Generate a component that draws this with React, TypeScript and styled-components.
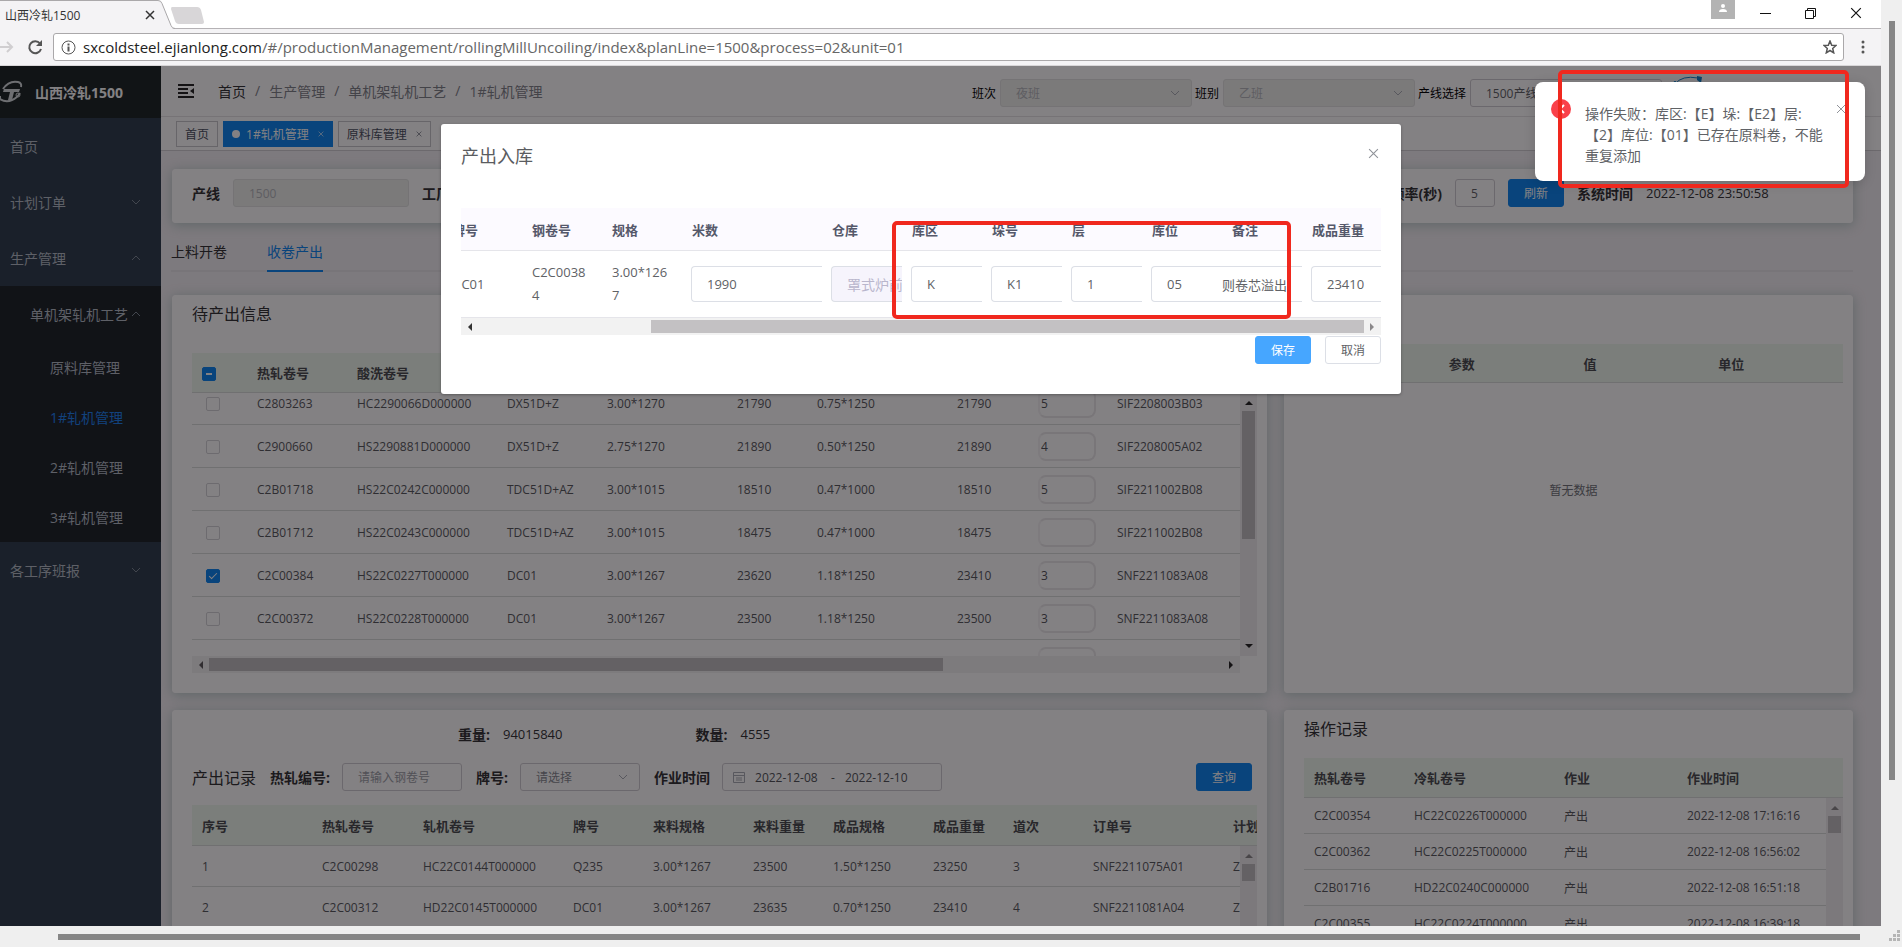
import React from "react";
import styled, { createGlobalStyle, css } from "styled-components";

const GlobalStyle = createGlobalStyle`
  *, *::before, *::after { box-sizing: border-box; }
  html, body, #root { height: 100%; }
  body {
    margin: 0;
    overflow: hidden;
    font-family: "Open Sans", "Noto Sans CJK SC", sans-serif;
    font-size: 14px;
    color: #303133;
    background: #efefef;
  }
  button, input, select { font-family: inherit; margin: 0; }
  a { color: inherit; text-decoration: none; }
  h1, h2, p { margin: 0; font-weight: 400; }
`;

/* ---------- remote viewer frame ---------- */

const Viewer = styled.div`
  display: grid;
  grid-template-columns: minmax(0, 1fr) 21px;
  grid-template-rows: minmax(0, 1fr) 21px;
  height: 100vh;
  background: #efefef;
`;

const Browser = styled.div`
  display: flex;
  flex-direction: column;
  min-width: 0;
  min-height: 0;
  background: #fff;
`;

const OuterVertical = styled.div`
  padding: 21px 7px 146px 8px;
  display: flex;
`;

const OuterHorizontal = styled.div`
  padding: 8px 21px 7px 58px;
  display: flex;
`;

const OuterThumb = styled.div`
  flex: 1;
  background: #868686;
`;

const Grip = styled.svg`
  width: 21px;
  height: 21px;
`;

/* ---------- browser chrome ---------- */

const TabStrip = styled.div`
  display: flex;
  height: 29px;
  flex: none;
  background: #fff;
  border-bottom: 1px solid #b5b2b5;
  position: relative;
`;

const TabShape = styled.svg`
  position: absolute;
  left: 0;
  top: 0;
`;

const BrowserTab = styled.div`
  position: relative;
  display: flex;
  align-items: center;
  justify-content: space-between;
  width: 155px;
  height: 29px;
  padding-left: 5px;
  font-size: 12px;
  color: #333;
`;

const IconButton = styled.button`
  display: flex;
  align-items: center;
  justify-content: center;
  border: 0;
  padding: 0;
  background: none;
  color: inherit;
`;

const WindowButtons = styled.div`
  display: flex;
  margin-left: auto;
  padding-right: 19px;
  gap: 34px;
  height: 26px;
  align-items: center;
  color: #111;
`;

const UserBadge = styled.div`
  align-self: flex-start;
  width: 24px;
  height: 19px;
  margin-right: -9px;
  background: #b3b3b3;
`;

const Toolbar = styled.div`
  display: flex;
  align-items: center;
  height: 37px;
  flex: none;
  padding-right: 13px;
  background: #f4f3f5;
  border-bottom: 1px solid #d8d6d8;
  color: #555;
`;

const AddressBox = styled.div`
  flex: 1;
  display: flex;
  align-items: center;
  height: 28px;
  margin: 0 14px 0 10px;
  padding: 0 6px 0 7px;
  gap: 7px;
  background: #fff;
  border: 1px solid #aaa8aa;
  border-radius: 3px;
`;

const Url = styled.span`
  flex: 1;
  font-size: 15px;
  color: #666;
  b { font-weight: 400; color: #222; }
`;

/* ---------- application shell ---------- */

const Page = styled.div`
  flex: 1;
  min-height: 0;
  display: flex;
  position: relative;
  overflow: hidden;
  background: #f3f0f4;
`;

const Sidebar = styled.nav`
  width: 161px;
  flex: none;
  background: #2d3d4c;
  color: #b4bcc6;
  svg { color: #7d8894; }
`;

const Brand = styled.div`
  display: flex;
  align-items: center;
  height: 52px;
  gap: 11px;
  background: #1a2424;
  color: #fff;
  font-size: 14px;
  font-weight: 700;
  svg { color: #d5dadd; }
`;

const MenuItem = styled.a<{ $level?: number; $active?: boolean }>`
  display: flex;
  align-items: center;
  justify-content: space-between;
  height: ${(p) => (p.$level === 2 ? 50 : 56)}px;
  padding: 0 20px 0 ${(p) => [10, 30, 50][p.$level ?? 0]}px;
  color: ${(p) => (p.$active ? "#1c80f0" : "inherit")};
  white-space: nowrap;
`;

const SubMenu = styled.div`
  background: #1a2226;
`;

const Main = styled.main`
  flex: 1;
  min-width: 0;
  display: flex;
  flex-direction: column;
`;

const Navbar = styled.header`
  display: flex;
  align-items: center;
  height: 51px;
  flex: none;
  padding: 0 178px 0 17px;
  background: #fff;
  border-bottom: 1px solid #e4e2e4;
`;

const Breadcrumb = styled.div`
  display: flex;
  gap: 9px;
  margin-left: 24px;
  color: #7f8289;
  a:first-child { color: #303133; }
`;

const ShiftBar = styled.div`
  display: flex;
  align-items: center;
  gap: 3px;
  margin-left: auto;
  padding-top: 4px;
  font-size: 12px;
  color: #000;
`;

const Field = styled.label<{ $bold?: boolean; $gap?: number }>`
  display: flex;
  align-items: center;
  gap: ${(p) => p.$gap ?? 4}px;
  white-space: nowrap;
  font-weight: ${(p) => (p.$bold ? 700 : 400)};
`;

const box = css`
  height: 28px;
  border: 1px solid #cfcdd2;
  border-radius: 3px;
  background: #fff;
  color: #606266;
  font-size: 12px;
  outline: 0;
  &:disabled {
    background: #eef0ed;
    border-color: #e2e3e2;
    color: #b4b7bb;
    opacity: 1;
  }
  &::placeholder { color: #9b9ea6; opacity: 1; }
`;

const TextBox = styled.input<{ $w: number }>`
  ${box}
  width: ${(p) => p.$w}px;
  padding: 0 15px;
`;

const SelectWrap = styled.span<{ $w: number }>`
  position: relative;
  display: flex;
  width: ${(p) => p.$w}px;
  svg { position: absolute; right: 12px; top: 10px; color: #a9adb4; }
`;

const SelectBox = styled.select<{ $hint?: boolean }>`
  ${box}
  appearance: none;
  width: 100%;
  padding: 0 15px;
  ${(p) => p.$hint && "color: #85888f;"}
`;

const Avatar = styled.svg`
  margin-left: 8px;
  margin-bottom: 4px;
`;

const TagsBar = styled.div`
  display: flex;
  align-items: center;
  gap: 5px;
  height: 34px;
  flex: none;
  padding-left: 15px;
  background: #fff;
  border-bottom: 1px solid #d0ced2;
`;

const Tag = styled.a<{ $active?: boolean }>`
  display: flex;
  align-items: center;
  height: 26px;
  padding: 0 8px;
  gap: 9px;
  border: 1px solid ${(p) => (p.$active ? "#0a84f0" : "#c6c6ca")};
  background: ${(p) => (p.$active ? "#0a84f0" : "#fff")};
  color: ${(p) => (p.$active ? "#fff" : "#495060")};
  font-size: 12px;
  white-space: nowrap;
`;

const Dot = styled.i`
  width: 8px;
  height: 8px;
  border-radius: 50%;
  background: #fff;
  margin-right: -3px;
`;

const Content = styled.div`
  flex: 1;
  min-height: 0;
  overflow: hidden;
  padding: 18px 28px 0 11px;
`;

const Card = styled.section<{ $h?: number }>`
  height: ${(p) => (p.$h ? `${p.$h}px` : "auto")};
  min-width: 0;
  padding: 0 10px 0 20px;
  overflow: hidden;
  background: #fff;
  border-radius: 4px;
`;

const Shadow = styled.div`
  border-radius: 4px;
  min-width: 0;
  box-shadow: 0 2px 12px 1px rgba(176, 196, 194, 0.8);
`;

const StatusBar = styled.div`
  display: flex;
  align-items: center;
  gap: 13px;
  height: 54px;
  padding: 0 70px 6px 0;
`;

const PushRight = styled.div`
  display: flex;
  align-items: center;
  gap: 13px;
  margin-left: auto;
`;

const Clock = styled.span`
  min-width: 127px;
  font-size: 13px;
`;

const Button = styled.button<{ $primary?: boolean; $bright?: boolean }>`
  height: 28px;
  min-width: 56px;
  padding: 0;
  border: 1px solid ${(p) => (p.$primary ? (p.$bright ? "#46a6ff" : "#0a84f0") : "#dcdfe6")};
  border-radius: 3px;
  background: ${(p) => (p.$primary ? (p.$bright ? "#46a6ff" : "#0a84f0") : "#fff")};
  color: ${(p) => (p.$primary ? "#fff" : "#606266")};
  font-size: 12px;
`;

const Tabs = styled.div`
  display: flex;
  gap: 40px;
  height: 40px;
  margin: 9px 0 23px -1px;
  border-bottom: 2px solid #e8e6ea;
`;

const TabLink = styled.a<{ $active?: boolean }>`
  height: 40px;
  line-height: 40px;
  color: ${(p) => (p.$active ? "#0a84f0" : "#303133")};
  border-bottom: 2px solid ${(p) => (p.$active ? "#0a84f0" : "transparent")};
`;

const Columns = styled.div`
  display: grid;
  grid-template-columns: minmax(0, 1095fr) minmax(0, 569fr);
  gap: 17px;
`;

const CardTitle = styled.h2`
  height: 38px;
  line-height: 38px;
  font-size: 16px;
  white-space: nowrap;
`;

const Clip = styled.div<{ $h?: number }>`
  overflow: hidden;
  min-width: 0;
  flex: 1;
  height: ${(p) => (p.$h ? `${p.$h}px` : "auto")};
`;

const Row = styled.div`
  display: flex;
`;

const HeadArea = styled.div`
  background: #eff8ee;
  overflow: hidden;
`;

const Spacer = styled.div<{ $h: number }>`
  height: ${(p) => p.$h}px;
`;

const Table = styled.table<{ $rowH: number; $pull?: number }>`
  table-layout: fixed;
  width: 100%;
  border-collapse: separate;
  border-spacing: 0;
  margin-top: -${(p) => p.$pull ?? 0}px;
  th, td {
    height: ${(p) => p.$rowH}px;
    padding: 0 0 0 10px;
    text-align: left;
    white-space: nowrap;
    border-bottom: 1px solid #d9dcdb;
    color: #56585d;
    font-size: 12px;
  }
  th { font-size: 13px; font-weight: 700; color: #484b4f; overflow: hidden; }
`;

const Check = styled.input`
  display: block;
  appearance: none;
  width: 14px;
  height: 14px;
  margin: 2px 0 0 4px;
  border: 1px solid #d2d2d6;
  border-radius: 2px;
  background: #fff;
  position: relative;
  &:checked, &[data-mixed] { background: #0a84f0; border-color: #0a84f0; }
  &:checked::after {
    content: "";
    position: absolute;
    left: 4px;
    top: 1px;
    width: 4px;
    height: 8px;
    border: solid #fff;
    border-width: 0 1px 1px 0;
    transform: rotate(45deg);
  }
  &[data-mixed]::after {
    content: "";
    position: absolute;
    left: 3px;
    top: 5px;
    width: 6px;
    height: 2px;
    background: #fff;
  }
  &[data-mixed] { margin-left: 0; }
`;

const PassInput = styled.input`
  display: block;
  width: 58px;
  height: 29px;
  margin-left: 1px;
  padding: 0 0 0 1px;
  border: 2px solid #eae8ea;
  border-left-color: #f4f2f4;
  border-radius: 8px;
  background: transparent;
  color: #505358;
  font-size: 12px;
`;

/* ---------- drawn scroll bars ---------- */

const VBar = styled.div`
  width: 17px;
  flex: none;
  display: flex;
  flex-direction: column;
  align-items: center;
  background: #f1eff1;
  padding: 6px 0;
`;

const VThumb = styled.div<{ $h: number }>`
  width: 13px;
  height: ${(p) => p.$h}px;
  margin: 4px 0 auto;
  background: #c1bfc1;
`;

const HBar = styled.div<{ $mr?: number }>`
  height: 17px;
  display: flex;
  align-items: center;
  justify-content: space-between;
  background: #f2f2f2;
  padding: 0 5px;
  margin-right: ${(p) => p.$mr ?? 0}px;
`;

const HTrack = styled.div<{ $left: number; $right: number }>`
  flex: 1;
  height: 13px;
  margin: 0 4px;
  padding: 0 ${(p) => p.$right}% 0 ${(p) => p.$left}%;
`;

const HThumb = styled.div<{ $dark?: boolean }>`
  height: 13px;
  background: ${(p) => (p.$dark ? "#c1bfc1" : "#c3c1c3")};
`;

/* ---------- output record card ---------- */

const Totals = styled.div`
  display: flex;
  gap: 133px;
  height: 48px;
  align-items: center;
  padding-left: 266px;
`;

const Total = styled.p`
  display: flex;
  align-items: center;
  gap: 13px;
  font-size: 13px;
  b { font-size: 14px; }
`;

const FilterBar = styled.div`
  display: flex;
  align-items: center;
  height: 28px;
  margin: 5px 5px 14px 0;
  gap: 14px;
`;

const FilterTitle = styled.h2`
  font-size: 16px;
  white-space: nowrap;
`;

const DateRange = styled.div`
  ${box}
  width: 220px;
  display: flex;
  align-items: center;
  gap: 10px;
  padding: 0 10px;
  font-weight: 400;
  color: #505358;
`;

const DateInput = styled.input`
  width: 66px;
  border: 0;
  padding: 0;
  background: none;
  font-size: 12px;
  color: inherit;
`;

/* ---------- overlay, dialog, message ---------- */

const Overlay = styled.div`
  position: absolute;
  inset: 0;
  display: flex;
  justify-content: center;
  align-items: flex-start;
  padding: 58px 39px 0 0;
  background: rgba(8, 4, 8, 0.5);
`;

const Dialog = styled.div`
  position: relative;
  width: 960px;
  padding: 20px 20px 30px;
  background: #fff;
  border-radius: 3px;
  box-shadow: 0 1px 3px rgba(0, 0, 0, 0.3);
`;

const DialogHead = styled.div`
  display: flex;
  justify-content: space-between;
  height: 64px;
  padding-right: 2px;
  line-height: 24px;
  h1 { font-size: 18px; color: #5a5c60; }
  button { height: 18px; color: #909399; }
`;

const DialogTable = styled.table`
  table-layout: fixed;
  width: 940px;
  margin-left: -19px;
  border-collapse: separate;
  border-spacing: 0;
  th {
    height: 43px;
    padding: 0 0 0 10px;
    text-align: left;
    font-size: 13px;
    color: #55586a;
    background: #fcfaff;
    border-bottom: 1px solid #e5e5ea;
    white-space: nowrap;
  }
  td {
    height: 67px;
    padding: 0 10px;
    font-size: 13px;
    line-height: 23px;
    color: #606266;
    word-break: break-all;
    border-bottom: 1px solid #e5e5ea;
  }
  td.edit { padding: 0 0 0 9px; }
  td.note { padding: 0; }
`;

const CellInput = styled.input<{ $note?: boolean }>`
  display: block;
  width: 100%;
  height: 36px;
  padding: 0 0 0 ${(p) => (p.$note ? 0 : 15)}px;
  border: 1px solid #dcdfe6;
  border-right: 0;
  border-left-width: ${(p) => (p.$note ? 0 : 1)}px;
  border-radius: ${(p) => (p.$note ? 0 : 4)}px 0 0 ${(p) => (p.$note ? 0 : 4)}px;
  background: #fff;
  color: #606266;
  font-size: 13px;
  &:disabled { background: #f6f4fc; color: #b9b6cc; font-size: 14px; }
`;

const DialogFoot = styled.div`
  display: flex;
  justify-content: flex-end;
  gap: 14px;
  margin-top: 1px;
`;

const RedMark = styled.div<{ $w: number; $h: number; $x: number; $y: number }>`
  position: absolute;
  left: ${(p) => p.$x}px;
  top: ${(p) => p.$y}px;
  width: ${(p) => p.$w}px;
  height: ${(p) => p.$h}px;
  border: 4px solid #f0281e;
  border-radius: 5px;
  pointer-events: none;
`;

const Notice = styled.div`
  position: absolute;
  right: 16px;
  top: 16px;
  width: 330px;
  height: 99px;
  display: flex;
  align-items: flex-start;
  padding: 17px 18px 0 16px;
  background: #fff;
  border-radius: 8px;
  box-shadow: 0 2px 12px rgba(0, 0, 0, 0.15);
  p {
    flex: 1;
    margin: 4px 0 0 14px;
    font-size: 14px;
    line-height: 21px;
    color: #606266;
    white-space: nowrap;
  }
  button { width: 12px; height: 20px; margin-left: -20px; color: #909399; }
`;

/* ---------- small icons ---------- */

const Chevron = ({ up = false }: { up?: boolean }) => (
  <svg width="10" height="8" viewBox="0 0 10 8" fill="none" stroke="currentColor" strokeWidth="1">
    <path d={up ? "M1 6l4-4 4 4" : "M1 2l4 4 4-4"} />
  </svg>
);

const Cross = ({ size = 10, width = 1 }: { size?: number; width?: number }) => (
  <svg width={size} height={size} viewBox="0 0 10 10" stroke="currentColor" strokeWidth={width}>
    <path d="M1 1l8 8M9 1l-8 8" />
  </svg>
);

const Arrow = ({ d, color = "#5a585a" }: { d: "up" | "down" | "left" | "right"; color?: string }) => {
  const paths = { up: "M0 6l4-4 4 4z", down: "M0 2h8l-4 4z", left: "M6 0v8L2 4z", right: "M2 0v8l4-4z" };
  return (
    <svg width="8" height="8" viewBox="0 0 8 8" fill={color}>
      <path d={paths[d]} />
    </svg>
  );
};

/* ---------- data ---------- */

const pending = [
  ["C2803263", "HC2290066D000000", "DX51D+Z", "3.00*1270", "21790", "0.75*1250", "21790", "5", "SIF2208003B03"],
  ["C2900660", "HS2290881D000000", "DX51D+Z", "2.75*1270", "21890", "0.50*1250", "21890", "4", "SIF2208005A02"],
  ["C2B01718", "HS22C0242C000000", "TDC51D+AZ", "3.00*1015", "18510", "0.47*1000", "18510", "5", "SIF2211002B08"],
  ["C2B01712", "HS22C0243C000000", "TDC51D+AZ", "3.00*1015", "18475", "0.47*1000", "18475", "", "SIF2211002B08"],
  ["C2C00384", "HS22C0227T000000", "DC01", "3.00*1267", "23620", "1.18*1250", "23410", "3", "SNF2211083A08"],
  ["C2C00372", "HS22C0228T000000", "DC01", "3.00*1267", "23500", "1.18*1250", "23500", "3", "SNF2211083A08"],
  ["", "", "", "", "", "", "", "", ""],
];
const pendingWidths = [55, 100, 150, 100, 130, 80, 140, 80, 80, 0];

const records = [
  ["1", "C2C00298", "HC22C0144T000000", "Q235", "3.00*1267", "23500", "1.50*1250", "23250", "3", "SNF2211075A01", "Z"],
  ["2", "C2C00312", "HD22C0145T000000", "DC01", "3.00*1267", "23635", "0.70*1250", "23410", "4", "SNF2211081A04", "Z"],
];
const recordHeads = ["序号", "热轧卷号", "轧机卷号", "牌号", "来料规格", "来料重量", "成品规格", "成品重量", "道次", "订单号", "计划"];
const recordWidths = [120, 101, 150, 80, 100, 80, 100, 80, 80, 140, 0];

const operations = [
  ["C2C00354", "HC22C0226T000000", "产出", "2022-12-08 17:16:16"],
  ["C2C00362", "HC22C0225T000000", "产出", "2022-12-08 16:56:02"],
  ["C2B01716", "HD22C0240C000000", "产出", "2022-12-08 16:51:18"],
  ["C2C00355", "HC22C0224T000000", "产出", "2022-12-08 16:39:18"],
];
const operationWidths = [100, 150, 123, 0];

const Cols = ({ widths }: { widths: number[] }) => (
  <colgroup>
    {widths.map((w, i) => (
      <col key={i} width={w || undefined} />
    ))}
  </colgroup>
);

type DropProps = { w: number; value: string; disabled?: boolean; hint?: boolean; label: string };

const Drop = ({ w, value, disabled, hint, label }: DropProps) => (
  <SelectWrap $w={w}>
    <SelectBox disabled={disabled} $hint={hint} aria-label={label}>
      <option>{value}</option>
    </SelectBox>
    <Chevron />
  </SelectWrap>
);

/* ---------- sections ---------- */

const Chrome = () => (
  <>
    <TabStrip>
      <TabShape width="210" height="29" viewBox="0 0 210 29">
        <path d="M0 0H158q3 0 4 3l9 23q1 3 4 3H0z" fill="#f4f3f5" />
        <path d="M0 .5H158q3 0 4 3l9 22q1 3 4 3" fill="none" stroke="#aaa8aa" />
        <path d="M172 7h25q3 0 4 3l3 12q0 2-2 2h-23q-3 0-4-3l-4-12q0-2 1-2z" fill="#d8d6d8" />
      </TabShape>
      <BrowserTab>
        <span>山西冷轧1500</span>
        <IconButton aria-label="关闭标签页">
          <Cross size={10} width={1.5} />
        </IconButton>
      </BrowserTab>
      <WindowButtons>
        <UserBadge>
          <svg width="24" height="19" viewBox="0 0 24 19" fill="#fff">
            <circle cx="12" cy="6" r="2" />
            <path d="M8 12q0-3 4-3t4 3z" />
          </svg>
        </UserBadge>
        <IconButton aria-label="最小化">
          <svg width="11" height="11" stroke="currentColor"><path d="M0 5.5h11" /></svg>
        </IconButton>
        <IconButton aria-label="还原">
          <svg width="11" height="11" fill="none" stroke="currentColor">
            <path d="M.5 2.5h8v8h-8zM2.500 2.500v-2h8v8h-2" />
          </svg>
        </IconButton>
        <IconButton aria-label="关闭">
          <Cross size={12} />
        </IconButton>
      </WindowButtons>
    </TabStrip>
    <Toolbar>
      <IconButton aria-label="前进">
        <svg width="14" height="14" fill="none" stroke="#d0ced0" strokeWidth="2"><path d="M0 7h12M7 2l5 5-5 5" /></svg>
      </IconButton>
      <IconButton aria-label="刷新页面">
        <svg width="29" height="16" viewBox="0 0 29 16" fill="none" stroke="#555" strokeWidth="2">
          <path d="M26 4.500A6 6 0 1 0 27 10" />
          <path d="M28 1v6h-6z" fill="#555" stroke="none" />
        </svg>
      </IconButton>
      <AddressBox>
        <svg width="15" height="15" viewBox="0 0 15 15" fill="none" stroke="#555" strokeWidth="1">
          <circle cx="7.500" cy="7.500" r="6.500" />
          <path d="M7.500 6.500v5M7.500 3.500v2" strokeWidth="2" />
        </svg>
        <Url>
          <b>sxcoldsteel.ejianlong.com</b>/#/productionManagement/rollingMillUncoiling/index&amp;planLine=1500&amp;process=02&amp;unit=01
        </Url>
        <IconButton aria-label="收藏">
          <svg width="14" height="14" viewBox="0 0 14 14" fill="none" stroke="#555" strokeWidth="1.500">
            <path d="M7 1l1.700 4.200 4.300.3-3.300 2.900 1 4.400L7 10.500l-3.700 2.300 1-4.400L1 5.500l4.300-.3z" />
          </svg>
        </IconButton>
      </AddressBox>
      <IconButton aria-label="菜单">
        <svg width="10" height="14" viewBox="0 0 10 14" fill="#555">
          <circle cx="5" cy="2" r="1.500" /><circle cx="5" cy="7" r="1.500" /><circle cx="5" cy="12" r="1.500" />
        </svg>
      </IconButton>
    </Toolbar>
  </>
);

const SideMenu = () => (
  <Sidebar>
    <Brand>
      <svg width="24" height="26" viewBox="0 0 24 26" fill="none" stroke="currentColor">
        <path d="M3 10C7 4 13 2 18 3q4 1 3 5" strokeWidth="2" />
        <path d="M4 10h16l-1 3h-5l-2 8H8l2-8H3z" fill="currentColor" stroke="none" />
        <path d="M0 17v3q6 4 12 1 5-2 8-7" strokeWidth="2" />
        <circle cx="18" cy="16" r="2" />
      </svg>
      山西冷轧1500
    </Brand>
    <MenuItem href="#home">首页</MenuItem>
    <MenuItem href="#plan">计划订单<Chevron /></MenuItem>
    <MenuItem href="#production">生产管理<Chevron up /></MenuItem>
    <SubMenu>
      <MenuItem href="#single" $level={1}>单机架轧机工艺<Chevron up /></MenuItem>
      <MenuItem href="#raw" $level={2}>原料库管理</MenuItem>
      <MenuItem href="#mill1" $level={2} $active>1#轧机管理</MenuItem>
      <MenuItem href="#mill2" $level={2}>2#轧机管理</MenuItem>
      <MenuItem href="#mill3" $level={2}>3#轧机管理</MenuItem>
    </SubMenu>
    <MenuItem href="#report">各工序班报<Chevron /></MenuItem>
  </Sidebar>
);

const TopBars = () => (
  <>
    <Navbar>
      <IconButton aria-label="收起菜单">
        <svg width="16" height="14" viewBox="0 0 16 14" fill="none" stroke="#222" strokeWidth="2">
          <path d="M0 1h16M0 5h10M0 9h10M0 13h16" />
          <path d="M16 4v6l-4-3z" fill="#222" stroke="none" />
        </svg>
      </IconButton>
      <Breadcrumb>
        <a href="#home">首页</a><span>/</span><a href="#production">生产管理</a><span>/</span>
        <a href="#single">单机架轧机工艺</a><span>/</span><a href="#mill1">1#轧机管理</a>
      </Breadcrumb>
      <ShiftBar>
        <Field>班次<Drop w={192} value="夜班" disabled label="班次" /></Field>
        <Field>班别<Drop w={192} value="乙班" disabled label="班别" /></Field>
        <Field>产线选择<Drop w={192} value="1500产线" label="产线选择" /></Field>
        <Avatar width="30" height="32" viewBox="0 0 30 32" fill="none" stroke="#1180c8">
          <path d="M2 9Q9 0 25 3" strokeWidth="1" />
          <path d="M24 1l5 1-1 6-4-3z" fill="#1180c8" stroke="none" />
          <circle cx="2" cy="8" r="1.500" fill="#1180c8" />
          <path d="M1 12q4 12 26 8" strokeWidth="2" />
        </Avatar>
      </ShiftBar>
    </Navbar>
    <TagsBar>
      <Tag href="#home">首页</Tag>
      <Tag href="#mill1" $active><Dot />1#轧机管理<Cross size={6} /></Tag>
      <Tag href="#raw">原料库管理<Cross size={6} /></Tag>
    </TagsBar>
  </>
);

const PendingCard = () => (
  <Shadow>
    <Card $h={398}>
      <CardTitle>待产出信息</CardTitle>
      <Spacer $h={20} />
      <HeadArea>
        <Table $rowH={40}>
          <Cols widths={pendingWidths} />
          <thead>
            <tr>
              <th><Check type="checkbox" data-mixed aria-label="全选" /></th>
              <th>热轧卷号</th>
              <th>酸洗卷号</th>
              {pendingWidths.slice(3).map((_, i) => <th key={i} />)}
            </tr>
          </thead>
        </Table>
      </HeadArea>
      <Row>
        <Clip $h={263}>
          <Table $rowH={43} $pull={11}>
            <Cols widths={pendingWidths} />
            <tbody>
              {pending.map((r, i) => (
                <tr key={i}>
                  <td>
                    {r[0] && <Check type="checkbox" defaultChecked={i === 4} aria-label={`选择第${i + 1}行`} />}
                  </td>
                  {r.map((v, j) => (
                    <td key={j}>
                      {j === 7 ? <PassInput defaultValue={v} aria-label="道次" /> : v}
                    </td>
                  ))}
                </tr>
              ))}
            </tbody>
          </Table>
        </Clip>
        <VBar>
          <Arrow d="up" color="#222" />
          <VThumb $h={128} />
          <Arrow d="down" color="#222" />
        </VBar>
      </Row>
      <HBar $mr={17}>
        <Arrow d="left" />
        <HTrack $left={0} $right={27}><HThumb $dark /></HTrack>
        <Arrow d="right" color="#222" />
      </HBar>
    </Card>
  </Shadow>
);

const EmptyText = styled.p`
  padding-top: 98px;
  text-align: center;
  font-size: 12px;
  color: #707378;
`;

const ParamCard = () => (
  <Shadow>
    <Card $h={398}>
      <Spacer $h={49} />
      <HeadArea>
        <Table $rowH={39}>
          <thead>
            <tr><th /><th>参数</th><th>值</th><th>单位</th></tr>
          </thead>
        </Table>
      </HeadArea>
      <EmptyText>暂无数据</EmptyText>
    </Card>
  </Shadow>
);

const RecordCard = () => (
  <Shadow>
    <Card $h={240}>
      <Totals>
        <Total><b>重量:</b>94015840</Total>
        <Total><b>数量:</b>4555</Total>
      </Totals>
      <FilterBar>
        <FilterTitle>产出记录</FilterTitle>
        <Field $bold $gap={12}>热轧编号:<TextBox $w={120} placeholder="请输入钢卷号" /></Field>
        <Field $bold $gap={12}>牌号:<Drop w={120} value="请选择" hint label="牌号" /></Field>
        <Field $bold $gap={12} as="div">
          作业时间
          <DateRange>
            <svg width="12" height="12" viewBox="0 0 12 12" fill="none" stroke="#a9adb4">
              <path d="M.5 1.500h11v10H.5zM.5 4.500h11M3 7h6M3 9h6" />
            </svg>
            <DateInput defaultValue="2022-12-08" aria-label="开始日期" />
            <span>-</span>
            <DateInput defaultValue="2022-12-10" aria-label="结束日期" />
          </DateRange>
        </Field>
        <PushRight><Button $primary>查询</Button></PushRight>
      </FilterBar>
      <HeadArea>
        <Table $rowH={41}>
          <Cols widths={recordWidths} />
          <thead><tr>{recordHeads.map((h) => <th key={h}>{h}</th>)}</tr></thead>
        </Table>
      </HeadArea>
      <Row>
        <Clip>
          <Table $rowH={41}>
            <Cols widths={recordWidths} />
            <tbody>
              {records.map((r) => <tr key={r[0]}>{r.map((v, j) => <td key={j}>{v}</td>)}</tr>)}
            </tbody>
          </Table>
        </Clip>
        <VBar><Arrow d="up" color="#8a888a" /><VThumb $h={17} /></VBar>
      </Row>
    </Card>
  </Shadow>
);

const OperationCard = () => (
  <Shadow>
    <Card $h={240}>
      <CardTitle>操作记录</CardTitle>
      <Spacer $h={10} />
      <HeadArea>
        <Table $rowH={40}>
          <Cols widths={operationWidths} />
          <thead><tr><th>热轧卷号</th><th>冷轧卷号</th><th>作业</th><th>作业时间</th></tr></thead>
        </Table>
      </HeadArea>
      <Row>
        <Clip>
          <Table $rowH={36}>
            <Cols widths={operationWidths} />
            <tbody>
              {operations.map((r) => <tr key={r[0]}>{r.map((v, j) => <td key={j}>{v}</td>)}</tr>)}
            </tbody>
          </Table>
        </Clip>
        <VBar><Arrow d="up" color="#8a888a" /><VThumb $h={17} /></VBar>
      </Row>
    </Card>
  </Shadow>
);

const dialogHeads = ["牌号", "钢卷号", "规格", "米数", "仓库", "库区", "垛号", "层", "库位", "备注", "成品重量"];
const dialogWidths = [80, 80, 80, 140, 80, 80, 80, 80, 80, 80, 80];
const dialogFields = ["1990", "罩式炉前", "K", "K1", "1", "05", "则卷芯溢出", "23410"];

const OutputDialog = () => (
  <Dialog role="dialog" aria-label="产出入库">
    <DialogHead>
      <h1>产出入库</h1>
      <IconButton aria-label="关闭对话框"><Cross size={11} /></IconButton>
    </DialogHead>
    <Clip>
      <DialogTable>
        <Cols widths={dialogWidths} />
        <thead><tr>{dialogHeads.map((h) => <th key={h}>{h}</th>)}</tr></thead>
        <tbody>
          <tr>
            <td>DC01</td>
            <td>C2C00384</td>
            <td>3.00*1267</td>
            {dialogFields.map((v, i) => (
              <td key={i} className={i === 6 ? "note" : "edit"}>
                <CellInput $note={i === 6} defaultValue={v} disabled={i === 1} aria-label={dialogHeads[i + 3]} />
              </td>
            ))}
          </tr>
        </tbody>
      </DialogTable>
    </Clip>
    <HBar>
      <Arrow d="left" color="#333" />
      <HTrack $left={19} $right={0}><HThumb /></HTrack>
      <Arrow d="right" color="#8a888a" />
    </HBar>
    <DialogFoot>
      <Button $primary $bright>保存</Button>
      <Button>取消</Button>
    </DialogFoot>
    <RedMark $x={451} $y={97} $w={399} $h={98} />
  </Dialog>
);

const ErrorNotice = () => (
  <Notice role="alert">
    <svg width="20" height="20" viewBox="0 0 20 20" fill="none">
      <circle cx="10" cy="10" r="10" fill="#f9414a" />
      <path d="M13 6l-4 4 4 4" stroke="#fff" strokeWidth="2" />
    </svg>
    <p>
      操作失败：库区:【E】垛:【E2】层:
      <br />
      【2】库位:【01】已存在原料卷，不能
      <br />
      重复添加
    </p>
    <IconButton aria-label="关闭提示"><Cross size={10} /></IconButton>
    <RedMark $x={23} $y={-12} $w={291} $h={118} />
  </Notice>
);

export default function App() {
  return (
    <Viewer>
      <GlobalStyle />
      <Browser>
        <Chrome />
        <Page>
          <SideMenu />
          <Main>
            <TopBars />
            <Content>
              <Shadow>
                <Card>
                  <StatusBar>
                    <Field $bold $gap={13}>产线<TextBox $w={176} defaultValue="1500" disabled /></Field>
                    <Field $bold>工厂</Field>
                    <PushRight>
                      <Field $bold $gap={13}>刷新频率(秒)<TextBox $w={40} defaultValue="5" /></Field>
                      <Button $primary>刷新</Button>
                      <b>系统时间</b>
                      <Clock>2022-12-08 23:50:58</Clock>
                    </PushRight>
                  </StatusBar>
                </Card>
              </Shadow>
              <Tabs>
                <TabLink href="#feed">上料开卷</TabLink>
                <TabLink href="#output" $active>收卷产出</TabLink>
              </Tabs>
              <Columns>
                <PendingCard />
                <ParamCard />
                <RecordCard />
                <OperationCard />
              </Columns>
            </Content>
          </Main>
          <Overlay><OutputDialog /></Overlay>
          <ErrorNotice />
        </Page>
      </Browser>
      <OuterVertical><OuterThumb /></OuterVertical>
      <OuterHorizontal><OuterThumb /></OuterHorizontal>
      <Grip viewBox="0 0 21 21" fill="#b5b5b5">
        <path d="M16 4h3v3h-3zM12 8h3v3h-3zM16 8h3v3h-3zM8 12h3v3H8zM12 12h3v3h-3zM16 12h3v3h-3z" />
      </Grip>
    </Viewer>
  );
}
